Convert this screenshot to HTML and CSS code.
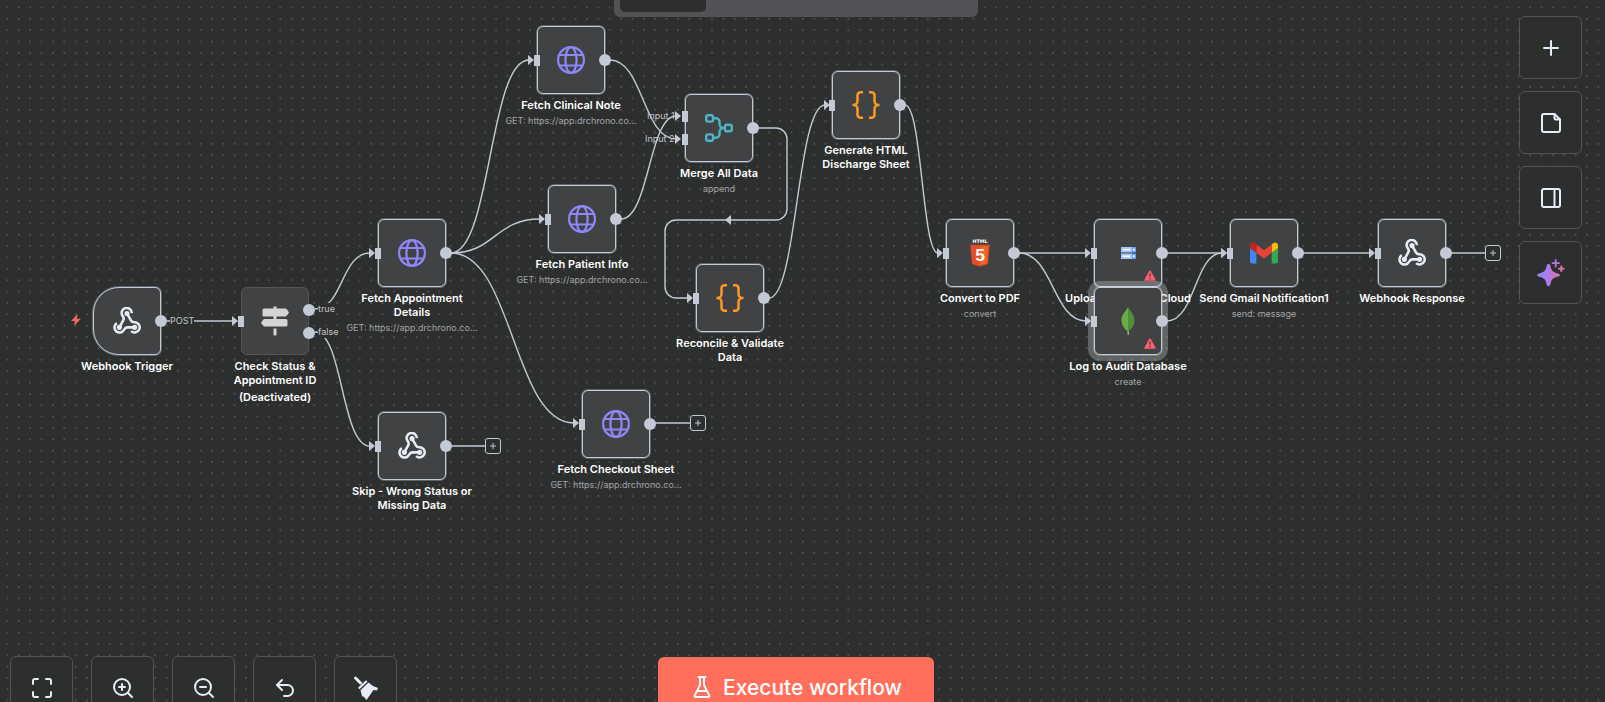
FILE: index.html
```html
<!DOCTYPE html>
<html lang="en">
<head>
<meta charset="utf-8">
<title>Workflow editor</title>
<link rel="stylesheet" href="styles.css">
</head>
<body>
<svg class="defs" aria-hidden="true">
  <defs>
    <symbol id="webhook" viewBox="1 1 22 22">
      <g fill="none" stroke="currentColor" stroke-width="2" stroke-linecap="butt">
        <path d="M17.5 17h-5.3c-1.200 0-2 .9-2.500 1.900A4 4 0 1 1 4 13.700"/>
        <path d="m6 17 3.200-5.800c.5-1 .1-2.100-.6-3.100a4 4 0 1 1 7.200-2.300"/>
        <path d="m12 6 3.200 5.700c.5 1 1.700 1.300 2.800 1.300a4 4 0 1 1-2.800 6.900"/>
      </g>
      <g fill="currentColor"><circle cx="6" cy="17" r="2"/><circle cx="12" cy="6.200" r="2"/><circle cx="18" cy="17" r="2"/></g>
    </symbol>
    <symbol id="globe" viewBox="0 0 28 28">
      <g fill="none" stroke="currentColor" stroke-width="2.200">
        <circle cx="14" cy="14" r="12.900"/><ellipse cx="14" cy="14" rx="5.600" ry="12.900"/><path d="M2 9h24M2 19.500h24"/>
      </g>
    </symbol>
    <symbol id="braces" viewBox="0 0 28 28">
      <path fill="none" stroke="currentColor" stroke-width="2.500" d="M11 1.300H8.500a3 3 0 0 0-3 3V10a4 4 0 0 1-4 4H.5h1a4 4 0 0 1 4 4v5.700a3 3 0 0 0 3 3H11M17 1.300h2.500a3 3 0 0 1 3 3V10a4 4 0 0 0 4 4h1-1a4 4 0 0 0-4 4v5.700a3 3 0 0 1-3 3H17"/>
    </symbol>
    <symbol id="merge" viewBox="0 0 28 28">
      <g fill="none" stroke="currentColor" stroke-width="2.400">
        <rect x="1.200" y="1.200" width="6.800" height="6.400" rx="1.800"/><rect x="1.200" y="20.400" width="6.800" height="6.400" rx="1.800"/><rect x="20" y="10.800" width="6.800" height="6.400" rx="2"/>
        <path d="M8 4.300h3a3.500 3.500 0 0 1 3.500 3.500v2.200a4 4 0 0 0 4 4h1.700M8 23.700h3a3.500 3.500 0 0 0 3.500-3.500V18a4 4 0 0 1 4-4"/>
      </g>
    </symbol>
    <symbol id="signpost" viewBox="0 0 28 30">
      <path fill="currentColor" d="M12.500.5h3v2h8.500q1.300 0 2 1l2 3-2 3q-.7 1-2 1H3a1.500 1.500 0 0 1-1.500-1.500V4A1.500 1.500 0 0 1 3 2.500h9.500zM12.500 10.500h3v2.500h9.500a1.500 1.500 0 0 1 1.500 1.500v4.500a1.500 1.500 0 0 1-1.500 1.500H4q-1.300 0-2-1l-2-2.700 2-2.800q.7-1 2-1h8.500zM12.500 22.500h3V29q-1.500 1.200-3 0z"/>
    </symbol>
    <symbol id="html5" viewBox="0 0 20 29">
      <path fill="#e44d26" d="M0 6h20l-1.800 20L10 28.500 1.800 26z"/><path fill="#f16529" d="M10 7.600h8.200l-1.500 17.200L10 26.800z"/>
      <text class="html5-word" x="10" y="4.500">HTML</text><text class="html5-digit" x="10" y="23">5</text>
    </symbol>
    <symbol id="storage" viewBox="0 0 15 12">
      <path fill="#a8c6fa" d="M0 0h11v5.500H0zM0 6.500h11V12H0z"/><path fill="#669df6" d="M11 0h4v5.500h-4zM11 6.500h4V12h-4z"/>
      <path fill="#fff" d="M2 2h7v1.300H2zM2 8.600h7v1.300H2zM12 1.700h1.700v2H12zM12 8.200h1.700v2H12z"/>
    </symbol>
    <symbol id="leaf" viewBox="0 0 14 28">
      <path fill="#a9a9a4" d="M6.300 22h1.400l.3 6H6.600z"/><path fill="#6cac48" d="M7 0C5.500 4 .5 6.500.5 13.500c0 5 3.500 9 6.500 11z"/><path fill="#4f9137" d="M7 0c1.500 4 6.500 6.500 6.500 13.500 0 5-3.500 9-6.500 11z"/>
    </symbol>
    <symbol id="gmail" viewBox="52 42 88 66">
      <path fill="#4285f4" d="M58 108h14V74L52 59v43c0 3.320 2.690 6 6 6"/><path fill="#34a853" d="M120 108h14c3.320 0 6-2.690 6-6V59l-20 15"/><path fill="#fbbc04" d="M120 48v26l20-15v-8c0-7.420-8.470-11.650-14.400-7.200"/><path fill="#ea4335" d="M72 74V48l24 18 24-18v26L96 92"/><path fill="#c5221f" d="M52 51v8l20 15V48l-5.600-4.200c-5.940-4.450-14.400-.22-14.400 7.200"/>
    </symbol>
    <symbol id="warn" viewBox="0 0 12 11">
      <path fill="#ff5c6c" stroke="#ff5c6c" stroke-width="1.500" stroke-linejoin="round" d="M6 1l5 9H1z"/><path stroke="#414244" stroke-width="1.300" d="M6 3.500v3.300M6 7.900v1.300"/>
    </symbol>
    <linearGradient id="spark" x1="0" x2="1"><stop offset="0" stop-color="#8b86ff"/><stop offset=".5" stop-color="#b07bea"/><stop offset="1" stop-color="#e0729f"/></linearGradient>
    <pattern id="dots" width="16" height="16" patternUnits="userSpaceOnUse" patternTransform="translate(1.800 1.800) scale(.7102)"><circle class="dot" cx="8" cy="8" r="0.900"/></pattern>
    <marker id="arrow" viewBox="0 0 6 10" markerWidth="6" markerHeight="10" refX="1" refY="5" orient="0" markerUnits="userSpaceOnUse"><path d="M0 0l6 5-6 5z" fill="#c3c9d5"/></marker>
  </defs>
</svg>

<main class="canvas">
  <svg class="edges" aria-hidden="true">
    <rect width="100%" height="100%" fill="url(#dots)"/>
    <g class="paths">
      <g marker-end="url(#arrow)">
        <path d="M167 321H233"/>
        <path d="M315 309C343 309 341 253 370 253"/>
        <path d="M315 332C343 332 341 446 370 446"/>
        <path d="M451 253C491 253 489 60 529 60"/>
        <path d="M451 253C495 253 495 219 540 219"/>
        <path d="M451 253C513 253 513 423 574 423"/>
        <path d="M610 60C643 60 643 139 676 139"/>
        <path d="M621 219C649 219 649 116 676 116"/>
        <path d="M758 128H776a11 11 0 0 1 11 11V209a11 11 0 0 1-11 11H676a11 11 0 0 0-11 11V287a11 11 0 0 0 11 11H688"/>
        <path d="M769 298C797 298 797 105 825 105"/>
        <path d="M905 105C922 105 922 253 938 253"/>
        <path d="M1019 253H1086"/>
        <path d="M1019 253C1053 253 1053 321 1086 321"/>
        <path d="M1167 253H1222"/>
        <path d="M1167 321C1195 321 1195 253 1222 253"/>
        <path d="M1303 253H1370"/>
      </g>
      <path d="M451 446H485M655 423H690M1451 253H1485"/>
      <path class="arrow-back" d="M731 215v10l-6-5z"/>
    </g>
  </svg>
  <span class="edge-label post">POST</span>
  <span class="edge-label true">true</span>
  <span class="edge-label false">false</span>
  <span class="port-label input1">Input 1</span>
  <span class="port-label input2">Input 2</span>

  <svg class="bolt" viewBox="0 0 10 12" aria-hidden="true"><path d="M6.500 0 0 7h3.800L3 12l7-7.200H6z" fill="#f0695d"/></svg>

  <article class="node trigger n-trigger"><svg class="icon light"><use href="#webhook"/></svg><i class="out"></i><div class="caption"><h2>Webhook Trigger</h2></div></article>
  <article class="node off n-check"><svg class="icon post-icon"><use href="#signpost"/></svg><i class="in"></i><i class="out upper"></i><i class="out lower"></i><div class="caption"><h2>Check Status &amp;<br>Appointment ID</h2><h2 class="state">(Deactivated)</h2></div></article>
  <article class="node n-appointment"><svg class="icon violet"><use href="#globe"/></svg><i class="in"></i><i class="out"></i><div class="caption"><h2>Fetch Appointment<br>Details</h2><p>GET: https://app.drchrono.co...</p></div></article>
  <article class="node n-skip"><svg class="icon light"><use href="#webhook"/></svg><i class="in"></i><i class="out"></i><div class="caption"><h2>Skip - Wrong Status or<br>Missing Data</h2></div></article>
  <article class="node n-clinical"><svg class="icon violet"><use href="#globe"/></svg><i class="in"></i><i class="out"></i><div class="caption"><h2>Fetch Clinical Note</h2><p>GET: https://app.drchrono.co...</p></div></article>
  <article class="node n-patient"><svg class="icon violet"><use href="#globe"/></svg><i class="in"></i><i class="out"></i><div class="caption"><h2>Fetch Patient Info</h2><p>GET: https://app.drchrono.co...</p></div></article>
  <article class="node n-checkout"><svg class="icon violet"><use href="#globe"/></svg><i class="in"></i><i class="out"></i><div class="caption"><h2>Fetch Checkout Sheet</h2><p>GET: https://app.drchrono.co...</p></div></article>
  <article class="node n-merge"><svg class="icon teal"><use href="#merge"/></svg><i class="in upper"></i><i class="in lower"></i><i class="out"></i><div class="caption"><h2>Merge All Data</h2><p>append</p></div></article>
  <article class="node n-reconcile"><svg class="icon orange"><use href="#braces"/></svg><i class="in"></i><i class="out"></i><div class="caption"><h2>Reconcile &amp; Validate<br>Data</h2></div></article>
  <article class="node n-generate"><svg class="icon orange"><use href="#braces"/></svg><i class="in"></i><i class="out"></i><div class="caption"><h2>Generate HTML<br>Discharge Sheet</h2></div></article>
  <article class="node n-convert"><svg class="icon"><use href="#html5"/></svg><i class="in"></i><i class="out"></i><div class="caption"><h2>Convert to PDF</h2><p>convert</p></div></article>
  <article class="node n-upload"><svg class="icon small"><use href="#storage"/></svg><svg class="warning"><use href="#warn"/></svg><i class="in"></i><i class="out"></i><div class="caption"><h2>Upload to Google Cloud</h2></div></article>
  <article class="node selected n-log"><svg class="icon"><use href="#leaf"/></svg><svg class="warning"><use href="#warn"/></svg><i class="in"></i><i class="out"></i><div class="caption"><h2>Log to Audit Database</h2><p>create</p></div></article>
  <article class="node n-gmail"><svg class="icon"><use href="#gmail"/></svg><i class="in"></i><i class="out"></i><div class="caption"><h2>Send Gmail Notification1</h2><p>send: message</p></div></article>
  <article class="node n-response"><svg class="icon light"><use href="#webhook"/></svg><i class="in"></i><i class="out"></i><div class="caption"><h2>Webhook Response</h2></div></article>

  <button class="add add-skip" aria-label="Add node"><svg viewBox="0 0 8 8"><path d="M4 1v6M1 4h6"/></svg></button>
  <button class="add add-checkout" aria-label="Add node"><svg viewBox="0 0 8 8"><path d="M4 1v6M1 4h6"/></svg></button>
  <button class="add add-response" aria-label="Add node"><svg viewBox="0 0 8 8"><path d="M4 1v6M1 4h6"/></svg></button>
</main>

<div class="dock dock-top"><div class="tabs"><div class="tab"></div></div></div>

<div class="side">
  <button class="tool" aria-label="Add"><svg viewBox="0 0 24 24"><path d="M5 12h14M12 5v14"/></svg></button>
  <button class="tool" aria-label="Note"><svg viewBox="0 0 24 24"><path d="M15.500 3H5a2 2 0 0 0-2 2v14a2 2 0 0 0 2 2h14a2 2 0 0 0 2-2V8.500z"/><path d="M15.500 3v4a1.500 1.500 0 0 0 1.500 1.500h4"/></svg></button>
  <button class="tool" aria-label="Panel"><svg viewBox="0 0 24 24"><rect x="3" y="3" width="18" height="18" rx="2"/><path d="M15.500 3v18"/></svg></button>
  <button class="tool" aria-label="Assistant"><svg class="spark" viewBox="0 0 28 28"><path fill="url(#spark)" stroke="none" d="M11.500 5c1 0 1.500.6 1.900 2 1.300 5 2.200 6 7.300 7.400 1.300.4 2.300.8 2.300 1.700s-1 1.400-2.300 1.700c-5.100 1.400-6 2.400-7.300 7.400-.4 1.300-.9 2-1.900 2s-1.500-.7-1.900-2c-1.300-5-2.200-6-7.300-7.400C1 17.500 0 17 0 16.100s1-1.300 2.300-1.700C7.400 13 8.300 12 9.600 7c.4-1.400.9-2 1.900-2z"/><path stroke="#b478df" stroke-width="1.800" d="M18.700 1v6.500M15.500 4.200h6.500"/><path stroke="#d873ae" stroke-width="2" d="M24.300 7.500v4.500M22 9.800h4.500"/></svg></button>
</div>

<div class="zoombar">
  <button class="tool" aria-label="Fit view"><svg viewBox="0 0 24 24"><path d="M8 3H5a2 2 0 0 0-2 2v3M21 8V5a2 2 0 0 0-2-2h-3M3 16v3a2 2 0 0 0 2 2h3M16 21h3a2 2 0 0 0 2-2v-3"/></svg></button>
  <button class="tool" aria-label="Zoom in"><svg viewBox="0 0 24 24"><circle cx="11" cy="11" r="8"/><path d="m21 21-4.300-4.300M11 8v6M8 11h6"/></svg></button>
  <button class="tool" aria-label="Zoom out"><svg viewBox="0 0 24 24"><circle cx="11" cy="11" r="8"/><path d="m21 21-4.300-4.300M8 11h6"/></svg></button>
  <button class="tool" aria-label="Undo"><svg viewBox="0 0 24 24"><path d="M9 14 4 9l5-5"/><path d="M4 9h10.500a5.500 5.500 0 0 1 0 11H11"/></svg></button>
  <button class="tool" aria-label="Tidy up"><svg viewBox="0 0 24 24"><path stroke-width="3" d="M1.500 2 6.500 7"/><path fill="currentColor" stroke="none" d="M4 11.800l8-7.600 1.500 1.500-8 7.600zM6.500 14.300l8-7.700 4.500 3.400 5 2-1 2.500-3.500-.5L12.500 24 10 21l-2-1z"/></svg></button>
</div>

<div class="dock dock-bottom">
  <button class="execute"><svg viewBox="0 0 24 24"><path d="M10 2v7.500a2 2 0 0 1-.2.900L4.700 20.600a1 1 0 0 0 .9 1.400h12.800a1 1 0 0 0 .9-1.400L14.200 10.400a2 2 0 0 1-.2-.900V2M8.500 2h7M7 16h10"/></svg>Execute workflow</button>
</div>
</body>
</html>
```
FILE: styles.css
```css
* { box-sizing: border-box; }
html, body { height: 100%; }
body {
  position: relative;
  margin: 0;
  overflow: hidden;
  background: #2d2e2e;
  color: #fff;
  font-family: Inter, "Liberation Sans", sans-serif;
}
button { padding: 0; font: inherit; color: inherit; }
.defs { position: absolute; width: 0; height: 0; }

/* canvas */
.canvas { position: relative; width: 100%; height: 100%; overflow: hidden; }
.edges { position: absolute; inset: 0; width: 100%; height: 100%; }
.dot { fill: #85888a; }
.paths { fill: none; stroke: #c3c9d5; stroke-width: 1.4; }
.arrow-back { fill: #c3c9d5; stroke: none; }

.edge-label, .port-label {
  position: absolute;
  font-size: 9px;
  line-height: 12px;
  color: #c3c6cc;
}
.edge-label { background: #2d2e2e; }
.post { left: 170px; top: 315px; }
.true { left: 318px; top: 303px; }
.false { left: 318px; top: 326px; }
.input1 { left: 647px; top: 110px; }
.input2 { left: 645px; top: 133px; }
.bolt { position: absolute; left: 71px; top: 314px; width: 10px; height: 12px; }

/* nodes */
.node {
  position: absolute;
  width: 68px;
  height: 68px;
  display: grid;
  place-items: center;
  background: #414244;
  border: 1px solid #c3c9d5;
  border-radius: 6px;
  box-shadow: 0 0 0 1px rgba(195, 201, 213, 0.35);
}
.trigger { border-radius: 26px 6px 6px 26px; }
.off { border-color: #535557; box-shadow: none; }
.selected { box-shadow: 0 0 0 1px rgba(195, 201, 213, 0.35), 0 0 0 6px rgba(255, 255, 255, 0.25); }

.icon { width: 28px; height: 28px; }
.post-icon { height: 30px; color: #d5d5d5; }
.small { width: 15px; height: 12px; }
.light { color: #e8ecf6; }
.violet { color: #8f87f7; }
.teal { color: #4fb3c6; }
.orange { color: #ff9922; }
.html5-word { font: bold 5px "DejaVu Sans", sans-serif; fill: #fff; text-anchor: middle; }
.html5-digit { font: bold 18px "Liberation Sans", sans-serif; fill: #fff; text-anchor: middle; }
.warning { position: absolute; right: 5px; bottom: 5px; width: 12px; height: 11px; }

.in, .out { position: absolute; background: #c3c9d5; }
.in { left: -4px; top: 28px; width: 6px; height: 11px; }
.out { right: -7px; top: 27px; width: 12px; height: 12px; border-radius: 50%; }
.upper { top: 16px; }
.lower { top: 39px; }

.caption {
  position: absolute;
  top: 71px;
  left: 50%;
  transform: translateX(-50%);
  display: flex;
  flex-direction: column;
  gap: 2px;
  text-align: center;
  white-space: nowrap;
}
.caption h2 { margin: 0; font-size: 11px; line-height: 14px; font-weight: 600; }
.caption .state { line-height: 16px; }
.caption p { margin: 0; font-size: 9px; line-height: 14px; color: #a2a4a8; }

.n-trigger { left: 93px; top: 287px; }
.n-check { left: 241px; top: 287px; }
.n-appointment { left: 378px; top: 219px; }
.n-skip { left: 378px; top: 412px; }
.n-clinical { left: 537px; top: 26px; }
.n-patient { left: 548px; top: 185px; }
.n-checkout { left: 582px; top: 390px; }
.n-merge { left: 685px; top: 94px; }
.n-reconcile { left: 696px; top: 264px; }
.n-generate { left: 832px; top: 71px; }
.n-convert { left: 946px; top: 219px; }
.n-upload { left: 1094px; top: 219px; }
.n-log { left: 1094px; top: 287px; }
.n-gmail { left: 1230px; top: 219px; }
.n-response { left: 1378px; top: 219px; }

.add {
  position: absolute;
  width: 16px;
  height: 16px;
  display: grid;
  place-items: center;
  background: #2d2e2e;
  border: 1px solid #c3c9d5;
  border-radius: 3px;
}
.add svg { width: 8px; height: 8px; stroke: #c3c9d5; }
.add-skip { left: 485px; top: 438px; }
.add-checkout { left: 690px; top: 415px; }
.add-response { left: 1485px; top: 245px; }

/* floating controls */
.tool {
  width: 63px;
  height: 63px;
  display: grid;
  place-items: center;
  background: #2d2e2e;
  border: 1px solid #535555;
  border-radius: 6px;
  color: #e8ecf6;
}
.tool svg, .execute svg {
  width: 24px;
  height: 24px;
  fill: none;
  stroke: currentColor;
  stroke-width: 2;
  stroke-linecap: round;
  stroke-linejoin: round;
}
.tool .spark { width: 28px; height: 28px; }
.side { position: absolute; top: 16px; right: 23px; display: grid; gap: 12px; }
.zoombar { position: absolute; left: 10px; bottom: -17px; display: flex; gap: 18px; }

.dock { position: absolute; left: 0; right: 13px; display: flex; justify-content: center; }
.dock-top { top: -23px; }
.tabs { width: 364px; height: 40px; padding: 5px 6px; background: #525356; border-radius: 6px; }
.tab { width: 86px; height: 30px; background: #2d2e2e; border-radius: 5px; }
.dock-bottom { bottom: -15px; }
.execute {
  height: 60px;
  padding: 0 32px;
  display: flex;
  align-items: center;
  gap: 9px;
  border: 0;
  border-radius: 6px;
  background: #ff6f5c;
  font-size: 21px;
  font-weight: 500;
}
```
